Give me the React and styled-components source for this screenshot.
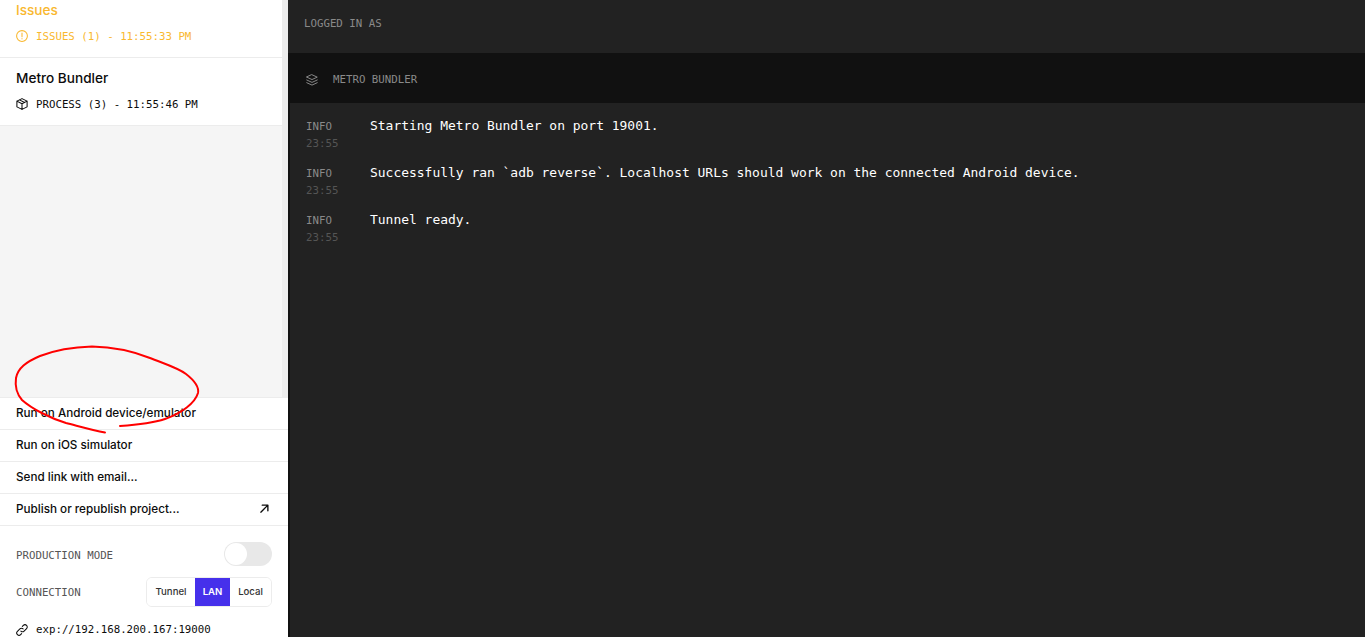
import React from "react";
import styled, { createGlobalStyle } from "styled-components";

const Global = createGlobalStyle`
  html, body { margin: 0; padding: 0; height: 100%; background: #222; overflow: hidden; }
  #root { height: 100%; }
  * { box-sizing: border-box; }
`;
const sans = `Inter, "Liberation Sans", sans-serif`;
const mono = `"DejaVu Sans Mono", "Liberation Mono", monospace`;

const Page = styled.div`
  position: relative; display: flex; width: 1365px; height: 637px; overflow: hidden;
`;
const Sidebar = styled.aside`
  width: 288px; flex: none; display: flex; flex-direction: column; background: #f5f5f5; overflow: hidden;
`;
const Scroll = styled.div`
  flex: 1; min-height: 0; display: flex; border-right: 6px solid #ececec; overflow: hidden;
`;
const List = styled.div`
  flex: 1; margin-top: -10px;
`;
const Item = styled.div`
  height: 68px; padding: 12px 16px 0; background: #fff; border-bottom: 1px solid #ececec;
  color: ${p => p.$color || "#0c0c0c"};
`;
const ItemTitle = styled.div`
  font: 500 13.6px/17px ${sans};
`;
const ItemMeta = styled.div`
  display: flex; align-items: center; gap: 8px; margin-top: 10px; height: 16px;
  font: 400 10.76px/16px ${mono};
  svg { margin-top: -2px; }
`;
const Actions = styled.div`
  flex: none; background: #fff;
`;
const Action = styled.div`
  display: flex; align-items: center; justify-content: space-between; height: 32px;
  padding: 0 19px 2px 16px; border-top: 1px solid #ececec;
  font: 500 11.7px/16px ${sans}; color: #0c0c0c;
`;
const Settings = styled.div`
  flex: none; height: 112px; padding: 16px 16px 0; background: #fff; border-top: 1px solid #ececec;
`;
const Row = styled.div`
  display: flex; align-items: center; justify-content: space-between;
  height: ${p => p.$h}px; margin-bottom: ${p => p.$mb || 0}px;
`;
const Label = styled.span`
  position: relative; top: ${p => p.$dy || 0}px;
  font: 400 10.76px/16px ${mono}; color: #555;
`;
const Toggle = styled.div`
  position: relative; width: 48px; height: 24px; border-radius: 12px; background: #e8e8e8;
`;
const Knob = styled.div`
  position: absolute; left: 1px; top: 1px; width: 22px; height: 22px; border-radius: 50%; background: #fff;
`;
const Segments = styled.div`
  display: flex; height: 30px; border: 1px solid #ececec; border-radius: 6px; overflow: hidden;
`;
const Segment = styled.div`
  width: ${p => p.$w}px; display: flex; align-items: center; justify-content: center;
  font: ${p => (p.$on ? 600 : 500)} 9.6px/16px ${sans};
  color: ${p => (p.$on ? "#fff" : "#333")}; background: ${p => (p.$on ? "#4630eb" : "#fff")};
`;
const LinkRow = styled.div`
  display: flex; align-items: center; gap: 8px; height: 16px;
  font: 400 10.76px/16px ${mono}; color: #0c0c0c;
`;
const Main = styled.main`
  flex: 1; display: flex; flex-direction: column; background: #111;
`;
const Top = styled.header`
  height: 53px; flex: none; display: flex; align-items: center; padding: 0 0 6px 16px; background: #222;
  font: 400 10.76px/16px ${mono}; color: #8a8a8a;
`;
const Band = styled.div`
  height: 50px; flex: none; display: flex; align-items: center; gap: 15px; padding: 4px 0 0 18px;
  font: 400 10.76px/16px ${mono}; color: #8a8a8a;
`;
const Logs = styled.div`
  flex: 1; margin-left: 2px; padding: 16px 16px 0; background: #222;
`;
const Log = styled.div`
  display: flex; height: 47px;
`;
const Stamp = styled.div`
  width: 64px; flex: none;
`;
const Level = styled.div`
  font: 400 10.76px/16px ${mono}; color: #8a8a8a;
`;
const Time = styled.div`
  margin-top: 1px; font: 400 10.76px/16px ${mono}; color: #555;
`;
const Message = styled.div`
  margin-top: -1px; font: 400 12.96px/16px ${mono}; color: #fff;
`;
const Scribble = styled.svg`
  position: absolute; left: 0; top: 340px; pointer-events: none;
`;

const logs = [
  "Starting Metro Bundler on port 19001.",
  "Successfully ran `adb reverse`. Localhost URLs should work on the connected Android device.",
  "Tunnel ready.",
];
const Ic = ({ size = 12, children, sw = 1.4 }) => (
  <svg width={size} height={size} viewBox="0 0 16 16" fill="none" stroke="currentColor" strokeWidth={sw} strokeLinecap="round" strokeLinejoin="round">{children}</svg>
);

export default function App() {
  return (
    <Page>
      <Global />
      <Sidebar>
        <Scroll>
          <List>
            <Item $color="#f9b82f">
              <ItemTitle>Issues</ItemTitle>
              <ItemMeta>
                <Ic><circle cx="8" cy="8" r="7.200" /><path d="M8 4v5M8 11.500v.3" /></Ic>
                ISSUES (1) - 11:55:33 PM
              </ItemMeta>
            </Item>
            <Item>
              <ItemTitle>Metro Bundler</ItemTitle>
              <ItemMeta>
                <Ic><path d="M8 .8l6.800 3.400v7.600L8 15.200l-6.800-3.400V4.200zM1.200 4.200L8 7.600l6.800-3.400M8 7.600v7.600M4.600 2.500l6.800 3.400" /></Ic>
                PROCESS (3) - 11:55:46 PM
              </ItemMeta>
            </Item>
          </List>
        </Scroll>
        <Actions>
          <Action>Run on Android device/emulator</Action>
          <Action>Run on iOS simulator</Action>
          <Action>Send link with email...</Action>
          <Action>Publish or republish project...
            <Ic size={9} sw={2.4}><path d="M1.500 14.500L14 2M4 2h10v10" /></Ic>
          </Action>
        </Actions>
        <Settings>
          <Row $h={24} $mb={11}><Label $dy={2}>PRODUCTION MODE</Label><Toggle><Knob /></Toggle></Row>
          <Row $h={30} $mb={15}>
            <Label $dy={1}>CONNECTION</Label>
            <Segments><Segment $w={48}>Tunnel</Segment><Segment $w={35} $on>LAN</Segment><Segment $w={41}>Local</Segment></Segments>
          </Row>
          <LinkRow>
            <Ic><path d="M6.500 9.500a3 3 0 0 0 4.300 0l3.300-3.300a3 3 0 0 0-4.300-4.300l-1.300 1.300M9.500 6.500a3 3 0 0 0-4.300 0l-3.300 3.300a3 3 0 0 0 4.300 4.300l1.300-1.300" /></Ic>
            exp://192.168.200.167:19000
          </LinkRow>
        </Settings>
      </Sidebar>
      <Main>
        <Top>LOGGED IN AS</Top>
        <Band>
          <Ic sw={1.3}><path d="M8 1l7 3.200-7 3.200-7-3.200zM1 8l7 3.200L15 8M1 11.600l7 3.200 7-3.200" /></Ic>
          METRO BUNDLER
        </Band>
        <Logs>
          {logs.map(m => (
            <Log key={m}>
              <Stamp><Level>INFO</Level><Time>23:55</Time></Stamp>
              <Message>{m}</Message>
            </Log>
          ))}
        </Logs>
      </Main>
      <Scribble width="210" height="100" viewBox="0 340 210 100" fill="none" stroke="#f00" strokeWidth="2" strokeLinecap="round" strokeLinejoin="round">
        <path d="M105 432.500C92 430 78 426 66 423C50 418 32 409 22 400C16 393 15 385 16 378C18 368 26 362 40 356C58 349 75 347 92 346.500C115 347 135 352 150 358C165 364 178 368 186 374C195 381 199 388 198 393C195 403 182 413 165 419C150 424 135 425 120 426" />
      </Scribble>
    </Page>
  );
}
